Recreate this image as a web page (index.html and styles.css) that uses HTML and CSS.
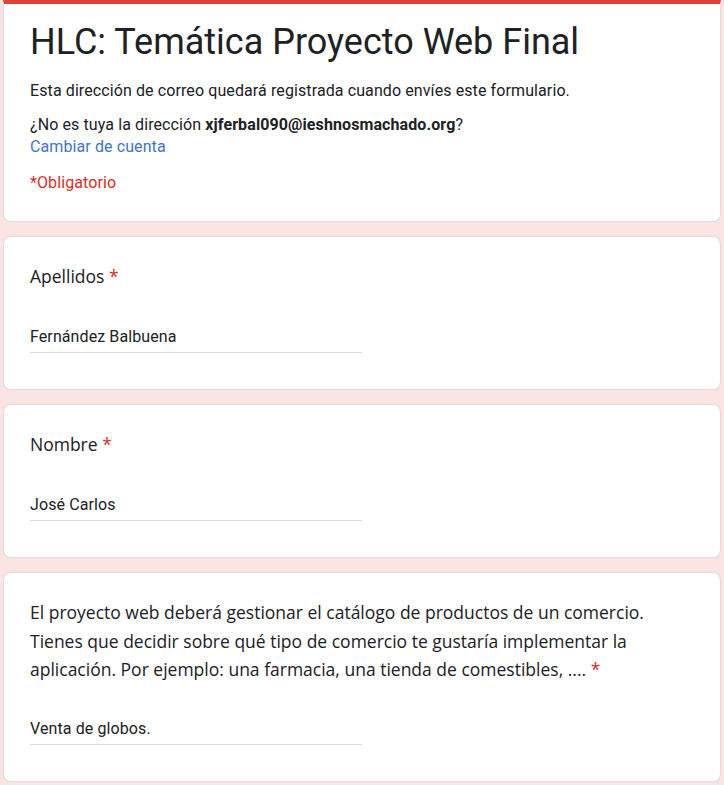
FILE: index.html
```html
<!DOCTYPE html>
<html lang="es">
<head>
<meta charset="utf-8">
<title>HLC: Temática Proyecto Web Final</title>
<link rel="stylesheet" href="styles.css">
</head>
<body>
<main class="form">
  <section class="card header-card">
    <h1 class="title">HLC: Temática Proyecto Web Final</h1>
    <p class="info">Esta dirección de correo quedará registrada cuando envíes este formulario.</p>
    <p class="account">¿No es tuya la dirección <b>xjferbal090@ieshnosmachado.org</b>?<br><a class="switch" href="#">Cambiar de cuenta</a></p>
    <p class="required-note">*Obligatorio</p>
  </section>

  <section class="card question">
    <div class="label">Apellidos <span class="star">*</span></div>
    <div class="answer">Fernández Balbuena</div>
  </section>

  <section class="card question">
    <div class="label">Nombre <span class="star">*</span></div>
    <div class="answer">José Carlos</div>
  </section>

  <section class="card question long">
    <div class="label">El proyecto web deberá gestionar el catálogo de productos de un comercio. Tienes que decidir sobre qué tipo de comercio te gustaría implementar la aplicación. Por ejemplo: una farmacia, una tienda de comestibles, .... <span class="star">*</span></div>
    <div class="answer">Venta de globos.</div>
  </section>
</main>
</body>
</html>
```

FILE: styles.css
```css
* { box-sizing: border-box; }

html, body {
  margin: 0;
  padding: 0;
  background: #fbe3e1;
}

body {
  font-family: Roboto, "Liberation Sans", Arial, sans-serif;
  color: #202124;
}

.form {
  display: flex;
  flex-direction: column;
  gap: 14px;
  padding: 0 3px;
}

.card {
  background: #fff;
  border: 1px solid #dadce0;
  border-radius: 8px;
}

.header-card {
  border-top: 4px solid #db4437;
  border-radius: 0 0 8px 8px;
  padding: 16px 26px 27px;
}

.title {
  margin: 0;
  font-family: Roboto, sans-serif;
  font-weight: 400;
  font-size: 36px;
  line-height: 44px;
}

.info {
  margin: 15px 0 0;
  font-size: 16px;
  line-height: 24px;
  letter-spacing: 0.1px;
}

.account {
  margin: 11px 0 0;
  font-size: 16px;
  line-height: 22px;
  letter-spacing: 0.1px;
}

.account b { font-weight: 700; }

.switch {
  color: #4173d6;
  text-decoration: none;
}

.required-note {
  margin: 14px 0 0;
  font-size: 16px;
  line-height: 22px;
  letter-spacing: 0.1px;
  color: #d93025;
}

.question {
  padding: 25px 26px 36px;
}

.question.long {
  padding-top: 25px;
}

.label {
  max-width: 640px;
  font-family: "Open Sans", sans-serif;
  font-size: 17.5px;
  line-height: 28px;
  color: #202124;
}

.question.long .label {
  line-height: 28.5px;
}

.star {
  color: #d93025;
}

.answer {
  margin-top: 35px;
  width: 332px;
  padding-bottom: 3px;
  border-bottom: 1px solid #dadce0;
  font-size: 16px;
  line-height: 24px;
  letter-spacing: 0.1px;
}

.question.long .answer {
  margin-top: 33px;
}
```
